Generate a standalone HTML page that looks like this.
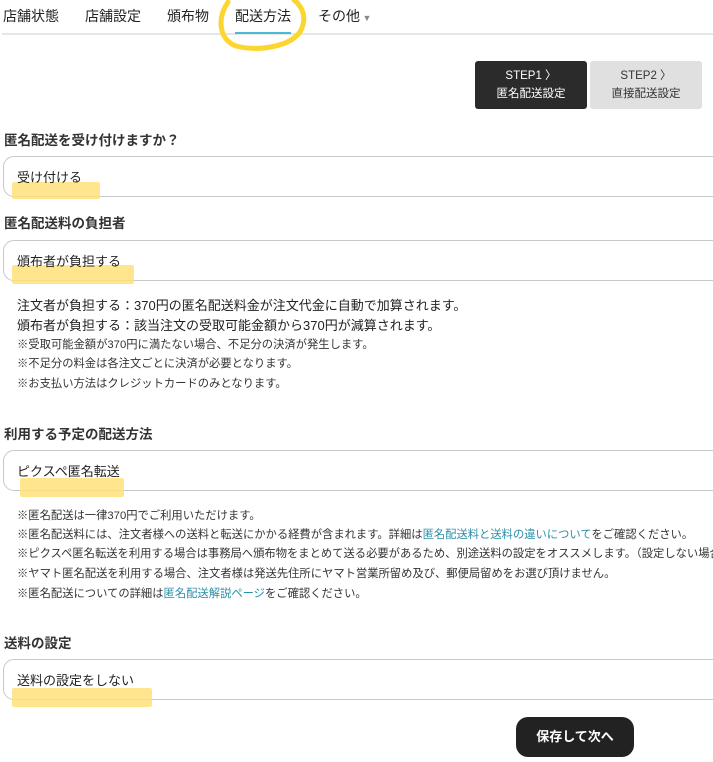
<!DOCTYPE html>
<html><head><meta charset="utf-8"><style>
*{margin:0;padding:0;box-sizing:border-box}
body{width:713px;height:762px;overflow:hidden;background:#fff;font-family:"Liberation Sans","Noto Sans CJK JP",sans-serif;color:#222;position:relative}
.a{position:absolute;white-space:nowrap}
.tab{font-size:14px;top:6px}
.h{font-size:13.5px;font-weight:bold;left:4px;color:#333}
.box{position:absolute;left:3px;width:730px;height:41px;border:1px solid #c8c8c8;border-radius:11px}
.val{font-size:13px;left:17px}
.n{font-size:13px;left:17px}
.s{font-size:11.3px;left:17px;color:#333}
.l{color:#2a8fa8}
.hl{position:absolute;background:#ffe27a;opacity:.85;border-radius:2px}
</style></head><body>
<div class="a tab" style="left:3px">店舗状態</div>
<div class="a tab" style="left:85px">店舗設定</div>
<div class="a tab" style="left:167px">頒布物</div>
<div class="a tab" style="left:235px">配送方法</div>
<div class="a tab" style="left:318px">その他<span style="font-size:9px;color:#888"> ▼</span></div>
<div class="a" style="left:2px;top:33px;width:711px;height:2px;background:#e6e6e6"></div>
<div class="a" style="left:235px;top:32px;width:56px;height:2px;background:#4ab9d6"></div>
<svg class="a" style="left:0;top:0" width="713" height="60"><path d="M228 2 C216 20,220 40,236 46 C260 52,290 46,300 32 C308 18,302 6,294 0" fill="none" stroke="#fcd62e" stroke-width="5" stroke-linecap="round"/></svg>
<div class="a" style="left:475px;top:61px;width:112px;height:48px;background:#2b2b2b;border-radius:3px;color:#fff;font-size:11.5px;text-align:center;line-height:18px;padding-top:6px">STEP1 〉<br>匿名配送設定</div>
<div class="a" style="left:590px;top:61px;width:112px;height:48px;background:#e0e0e0;border-radius:3px;color:#333;font-size:11.5px;text-align:center;line-height:18px;padding-top:6px">STEP2 〉<br>直接配送設定</div>

<div class="a h" style="top:129px">匿名配送を受け付けますか？</div>
<div class="box" style="top:156px"></div>
<div class="hl" style="left:12px;top:182px;width:88px;height:17px"></div>
<div class="a val" style="top:167px">受け付ける</div>

<div class="a h" style="top:212px">匿名配送料の負担者</div>
<div class="box" style="top:240px"></div>
<div class="hl" style="left:12px;top:265px;width:122px;height:19px"></div>
<div class="a val" style="top:251px">頒布者が負担する</div>

<div class="a n" style="top:295px">注文者が負担する：370円の匿名配送料金が注文代金に自動で加算されます。</div>
<div class="a n" style="top:315px">頒布者が負担する：該当注文の受取可能金額から370円が減算されます。</div>
<div class="a s" style="top:336px">※受取可能金額が370円に満たない場合、不足分の決済が発生します。</div>
<div class="a s" style="top:355px">※不足分の料金は各注文ごとに決済が必要となります。</div>
<div class="a s" style="top:375px">※お支払い方法はクレジットカードのみとなります。</div>

<div class="a h" style="top:423px">利用する予定の配送方法</div>
<div class="box" style="top:450px"></div>
<div class="hl" style="left:20px;top:478px;width:104px;height:19px"></div>
<div class="a val" style="top:461px">ピクスペ匿名転送</div>

<div class="a s" style="top:507px">※匿名配送は一律370円でご利用いただけます。</div>
<div class="a s" style="top:526px">※匿名配送料には、注文者様への送料と転送にかかる経費が含まれます。詳細は<span class="l">匿名配送料と送料の違いについて</span>をご確認ください。</div>
<div class="a s" style="top:545px">※ピクスペ匿名転送を利用する場合は事務局へ頒布物をまとめて送る必要があるため、別途送料の設定をオススメします。（設定しない場合</div>
<div class="a s" style="top:565px">※ヤマト匿名配送を利用する場合、注文者様は発送先住所にヤマト営業所留め及び、郵便局留めをお選び頂けません。</div>
<div class="a s" style="top:585px">※匿名配送についての詳細は<span class="l">匿名配送解説ページ</span>をご確認ください。</div>

<div class="a h" style="top:632px">送料の設定</div>
<div class="box" style="top:659px"></div>
<div class="hl" style="left:12px;top:688px;width:140px;height:19px"></div>
<div class="a val" style="top:670px">送料の設定をしない</div>

<div class="a" style="left:516px;top:717px;width:118px;height:40px;background:#222;border-radius:12px;color:#fff;font-size:13px;font-weight:bold;text-align:center;line-height:40px">保存して次へ</div>
</body></html>
